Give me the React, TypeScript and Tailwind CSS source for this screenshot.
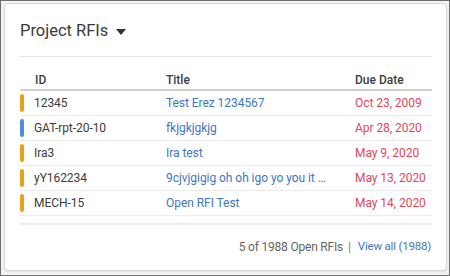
import { type FC } from 'react';

interface Rfi {
  id: string;
  title: string;
  due: string;
  tone: 'orange' | 'blue';
}

const rfis: Rfi[] = [
  { id: '12345', title: 'Test Erez 1234567', due: 'Oct 23, 2009', tone: 'orange' },
  { id: 'GAT-rpt-20-10', title: 'fkjgkjgkjg', due: 'Apr 28, 2020', tone: 'blue' },
  { id: 'Ira3', title: 'Ira test', due: 'May 9, 2020', tone: 'orange' },
  { id: 'yY162234', title: '9cjvjgigig oh oh igo yo you it …', due: 'May 13, 2020', tone: 'orange' },
  { id: 'MECH-15', title: 'Open RFI Test', due: 'May 14, 2020', tone: 'orange' },
];

const RfiRow: FC<{ rfi: Rfi }> = ({ rfi }) => (
  <div className="grid h-[25px] grid-cols-[146px_189px_1fr] items-center border-b border-[#ececec] text-[12px] tracking-[-0.05px]">
    <div className="flex items-center">
      <span
        className={
          rfi.tone === 'blue'
            ? 'h-[18px] w-[4px] rounded-[2px] bg-[#4a8fd8]'
            : 'h-[18px] w-[4px] rounded-[2px] bg-[#e9a11a]'
        }
      />
      <span className="ml-[10px] text-[#3c3c3c]">{rfi.id}</span>
    </div>
    <span className="whitespace-nowrap text-[#3f77bd]">{rfi.title}</span>
    <span className="whitespace-nowrap text-[#e2465c]">{rfi.due}</span>
  </div>
);

export default function App() {
  return (
    <div
      className="box-border flex h-[276px] w-[450px] border border-[#6e6e6e] bg-[#f3f3f3] pb-[4px] pl-[3px] pr-[2px] pt-[2px]"
      style={{ fontFamily: 'Roboto, "Noto Sans", sans-serif' }}
    >
      <div className="flex flex-1 flex-col rounded-[4px] border border-[#d9d9d9] bg-white pl-[15px] pr-[14px] shadow-[0_1px_2px_rgba(0,0,0,0.08)]">
        <div className="flex h-[52px] items-center pt-[3px]">
          <h2 className="text-[16.5px] font-normal tracking-[0px] text-[#3a3a3a]">Project RFIs</h2>
          <svg width="10" height="6" viewBox="0 0 10 6" className="ml-[8px] mt-[1px]">
            <path d="M0 0h10L5 6z" fill="#333" />
          </svg>
        </div>

        <div className="border-t border-[#e4e4e4]">
          <div className="grid h-[34px] grid-cols-[146px_189px_1fr] items-end border-b-2 border-[#cfcfcf] text-[12px] font-medium tracking-[0px] text-[#3c3c3c]">
            <span className="pl-[15px]">ID</span>
            <span>Title</span>
            <span>Due Date</span>
          </div>
          {rfis.map((rfi) => (
            <RfiRow key={rfi.id} rfi={rfi} />
          ))}
          <div className="mt-[7px] border-t-2 border-[#ebebeb]" />
        </div>

        <div className="mt-[13px] flex items-center justify-end pr-[1px] text-[12px] tracking-[-0.2px]">
          <span className="text-[#666]">5 of 1988 Open RFIs</span>
          <span className="ml-[5px] text-[#777]">|</span>
          <a className="ml-[7px] text-[11.5px] text-[#3f77bd]">View all (1988)</a>
        </div>
      </div>
    </div>
  );
}
